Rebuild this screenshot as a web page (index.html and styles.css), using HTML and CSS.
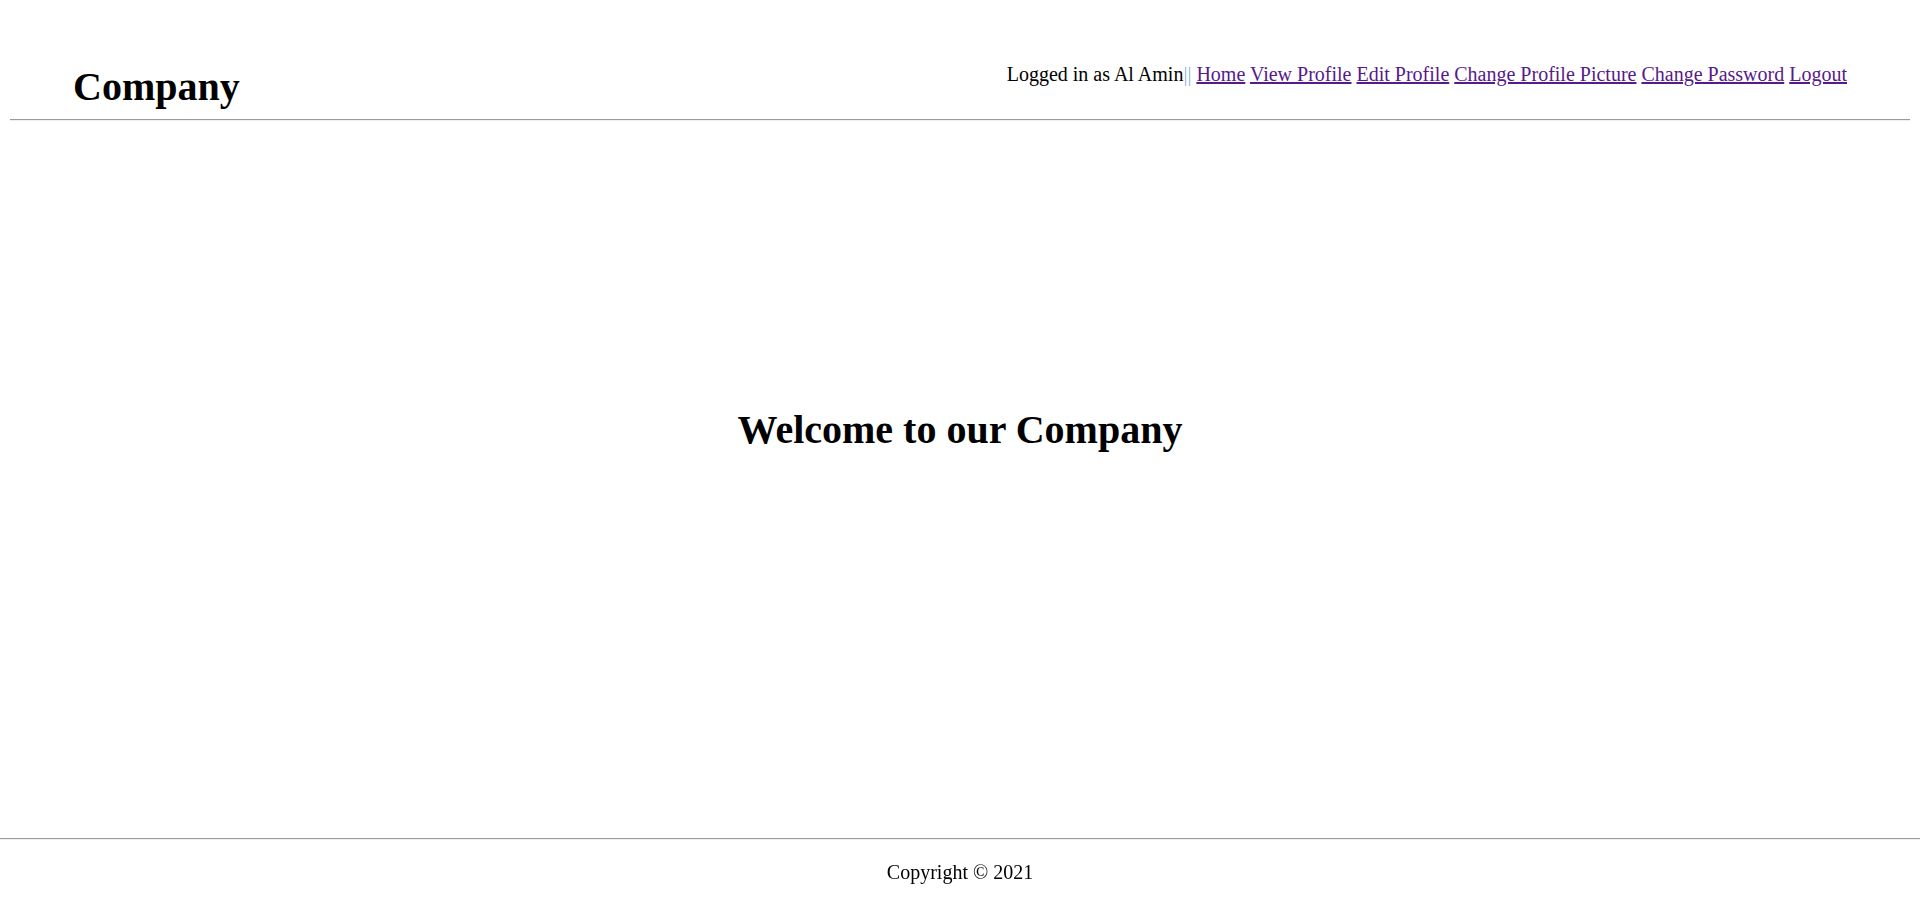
FILE: index.html
```html
<!DOCTYPE html>
<html>
<head>
<meta charset="utf-8">
<title>Company</title>
<link rel="stylesheet" href="styles.css">
</head>
<body>
<header class="site-header">
  <h1 class="brand">Company</h1>
  <nav class="nav">Logged in as Al Amin<span class="sep">||</span> <a href="#">Home</a> <a href="#">View Profile</a> <a href="#">Edit Profile</a> <a href="#">Change Profile Picture</a> <a href="#">Change Password</a> <a href="#">Logout</a></nav>
</header>
<hr class="rule">
<main class="main">
  <h1 class="welcome">Welcome to our Company</h1>
</main>
<footer class="site-footer">
  <hr class="rule footer-rule">
  <p class="copy">Copyright © 2021</p>
</footer>
</body>
</html>
```

FILE: styles.css
```css
html, body {
  height: 100%;
}
body {
  margin: 10px;
  font-family: "Liberation Serif", "Times New Roman", serif;
  font-size: 20px;
  line-height: 23px;
  color: #000;
  background: #fff;
}
.site-header {
  display: flex;
  justify-content: space-between;
  align-items: flex-start;
  padding: 53px 63px 0 63px;
}
.brand {
  margin: 1px 0 0 0;
  font-size: 40px;
  line-height: 45px;
  font-weight: bold;
}
.nav {
  line-height: 23px;
}
.nav a {
  color: #551a8b;
}
.sep {
  color: #8fb3dc;
}
.rule {
  margin: 10px 0 0 0;
  border: 0;
  border-top: 1px solid #9a9a9a;
  border-bottom: 1px solid #eeeeee;
  height: 0;
}
.main {
  padding-top: 286px;
}
.welcome {
  margin: 0;
  text-align: center;
  font-size: 40px;
  line-height: 46px;
  font-weight: bold;
}
.site-footer {
  position: fixed;
  left: 0;
  right: 0;
  bottom: 0;
  padding-bottom: 18px;
}
.footer-rule {
  margin: 0;
}
.copy {
  margin: 21px 0 0 0;
  text-align: center;
}
```
